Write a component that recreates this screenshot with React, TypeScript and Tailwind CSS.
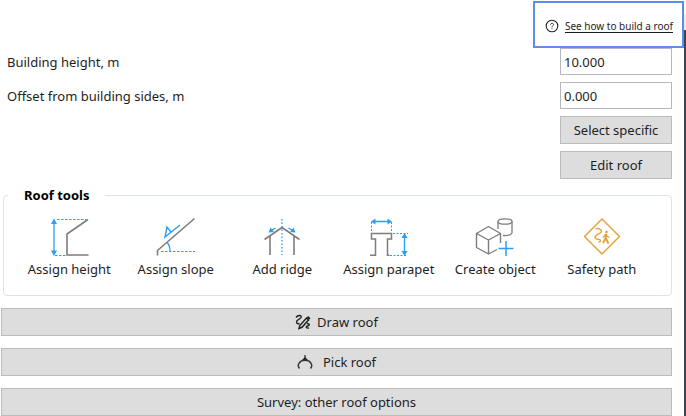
import { useState } from "react";
import type { ReactNode } from "react";

type Tool = {
  name: string;
  icon: ReactNode;
};

const GREY = "#7d7d7d";
const BLUE = "#2b9df5";
const ORANGE = "#e5a23c";

function ToolSvg({ children }: { children: ReactNode }) {
  return (
    <svg viewBox="0 0 40 40" className="h-10 w-10" fill="none" aria-hidden="true">
      {children}
    </svg>
  );
}

const tools: Tool[] = [
  {
    name: "Assign height",
    icon: (
      <ToolSvg>
        <path d="M8 2.5H37M6 38.5H17" stroke={BLUE} strokeDasharray="2.500 1.500" />
        <path d="M5 5V36" stroke={BLUE} strokeWidth="1.3" />
        <path d="M5 1.5L8 7H2ZM5 39L8 33.500H2Z" fill={BLUE} />
        <path d="M39 2.500L18 17V38H39.500" stroke={GREY} strokeWidth="1.6" />
      </ToolSvg>
    ),
  },
  {
    name: "Assign slope",
    icon: (
      <ToolSvg>
        <path d="M5 34.500H39" stroke={BLUE} strokeDasharray="2.500 1.500" />
        <path d="M11 25.500Q14 28.500 14 34" stroke={BLUE} strokeWidth="1.3" />
        <path d="M24 8L9 20L11 10L15.500 15.500" stroke={BLUE} strokeWidth="1.4" />
        <path d="M38.500 1.500L1.500 33.500V38.500" stroke={GREY} strokeWidth="1.6" />
      </ToolSvg>
    ),
  },
  {
    name: "Add ridge",
    icon: (
      <ToolSvg>
        <path d="M20 2V38" stroke={BLUE} strokeWidth="1.3" strokeDasharray="1.5 2" />
        <path d="M13.500 11L9 13.500M26.500 11L31 13.500" stroke={BLUE} strokeWidth="1.3" />
        <path d="M6.500 15.500L8.500 10.500L12 15ZM33.500 15.500L31.500 10.500L28 15Z" fill={BLUE} />
        <path d="M2.500 22.500L20 10.500L37.500 22.500M8 19V38M32 19V38" stroke={GREY} strokeWidth="1.6" />
      </ToolSvg>
    ),
  },
  {
    name: "Assign parapet",
    icon: (
      <ToolSvg>
        <path d="M2.500 5V15M22.500 5V15M24 16.500H39M21 38.500H37" stroke={BLUE} strokeDasharray="2 1.5" />
        <path d="M5 4.500H20M35.500 19V36" stroke={BLUE} strokeWidth="1.4" />
        <path
          d="M2 4.500L6.500 1.500V7.500ZM23 4.500L18.500 1.500V7.500ZM35.500 16L38.500 21H32.500ZM35.500 39L38.500 34H32.500Z"
          fill={BLUE}
        />
        <path
          d="M1 38.300H6.500V22H2.500V16.500H22.500V22H18.500V38.300H20.500"
          stroke={GREY}
          strokeWidth="1.5"
        />
      </ToolSvg>
    ),
  },
  {
    name: "Create object",
    icon: (
      <ToolSvg>
        <path
          d="M25.500 26V16.500L13.500 9.500L1.500 16.500V30.500L13.500 37L22 32.500M1.500 16.500L13.500 23L25.500 16.500M13.500 23V37"
          stroke={GREY}
          strokeWidth="1.4"
          strokeLinejoin="round"
        />
        <ellipse cx="30" cy="4.500" rx="7" ry="2.700" stroke={GREY} strokeWidth="1.3" />
        <path d="M23 4.500V12M37 4.500V16Q35.500 19 28 18.500" stroke={GREY} strokeWidth="1.3" />
        <path d="M31 24V39M23.500 31.500H38.500" stroke={BLUE} strokeWidth="1.5" />
      </ToolSvg>
    ),
  },
  {
    name: "Safety path",
    icon: (
      <ToolSvg>
        <path
          d="M20 2L37.500 19.500L20 37L2.500 19.500Z"
          stroke={ORANGE}
          strokeWidth="1.5"
          strokeLinejoin="round"
        />
        <path
          d="M13.500 12C16 10.500 19.500 12.500 19.500 14.500C19.500 17 13 17 13 20.500C13 23 17.500 21.500 18.500 23.500C18.800 24.800 17.500 25 16.500 25"
          stroke={ORANGE}
          strokeWidth="1.4"
        />
        <circle cx="24.500" cy="15" r="1.300" fill={ORANGE} />
        <path d="M24.500 17L23.500 21.500L21 26M24 21.500L26.500 26.500" stroke={ORANGE} strokeWidth="2" />
        <path d="M21 20.500L23.500 17.500L25.500 19.500L27.500 20.500" stroke={ORANGE} strokeWidth="1.300" />
      </ToolSvg>
    ),
  },
];

function DrawIcon() {
  return (
    <svg viewBox="0 0 16 16" className="h-4 w-4" fill="none" stroke="#222222" aria-hidden="true">
      <path
        d="M1 3.500C3 .5 7 1 6 3.500C5 5.500 1.500 5.500 1.500 8C1.500 9.500 3 10 4.500 9.500"
        strokeWidth="1.400"
      />
      <path d="M4 14.500L4.800 11.500L11.500 4L13.500 6L7 13.300Z" strokeWidth="1.500" />
      <path d="M12.500 2.800L14.700 5" strokeWidth="2.200" />
      <path d="M12 9.500C15 9.500 15 11.500 12.500 12C10.500 12.500 11 14.500 14 14" strokeWidth="1.400" />
    </svg>
  );
}

function PickIcon() {
  return (
    <svg viewBox="0 0 16 16" className="h-4 w-4" fill="none" stroke="#333333" aria-hidden="true">
      <path d="M8 1V5" strokeWidth="1.300" />
      <path d="M8 3L11.500 6.500H4.500Z" fill="#222222" stroke="none" />
      <path d="M2.500 14.500C-.5 11 2.500 6.300 8 6.300C13.500 6.300 16.500 11 13.500 14.500" strokeWidth="1.500" />
    </svg>
  );
}

function HelpIcon() {
  return (
    <svg viewBox="0 0 14 14" className="h-[14px] w-[14px]" fill="none" stroke="#222222" aria-hidden="true">
      <circle cx="7" cy="7" r="5.800" strokeWidth="1.100" />
      <path d="M5.500 5.700C5.500 3.800 8.500 3.800 8.500 5.600C8.500 6.700 7 6.700 7 8.200M7 9.200V10.200" strokeWidth=".9" />
    </svg>
  );
}

const buttonClass =
  "flex items-center justify-center border border-[#bcbcbc] bg-[#dddddd] text-[#1e1e1e] hover:bg-[#d2e6f5]";
const inputClass =
  "h-[27px] w-28 border border-[#b4b7c0] bg-white px-[3px] text-[#1e1e1e] outline-none focus:border-[#569de5]";

export default function App() {
  const [height, setHeight] = useState("10.000");
  const [offset, setOffset] = useState("0.000");

  return (
    <div className="flex bg-white font-['Noto_Sans','Open_Sans',sans-serif] text-[13px] leading-5 text-[#1e1e1e]">
      <main className="min-w-0 flex-1 pt-px">
        <div className="ml-auto flex h-[47px] w-[151px] items-center justify-end gap-[6px] border-2 border-[#5b8def] pt-[3px] pr-[9px]">
          <HelpIcon />
          <a
            href="#help"
            className="text-[10px] leading-4 whitespace-nowrap underline underline-offset-2"
          >
            See how to build a roof
          </a>
        </div>

        <div className="mr-3 flex flex-col gap-[7px] pl-[7px]">
          <div className="flex items-center justify-between">
            <label htmlFor="building-height">Building height, m</label>
            <input
              id="building-height"
              className={inputClass}
              value={height}
              onChange={(e) => setHeight(e.target.value)}
            />
          </div>
          <div className="flex items-center justify-between">
            <label htmlFor="side-offset">Offset from building sides, m</label>
            <input
              id="side-offset"
              className={inputClass}
              value={offset}
              onChange={(e) => setOffset(e.target.value)}
            />
          </div>
          <button type="button" className={`${buttonClass} h-7 w-28 self-end`}>
            Select specific
          </button>
          <button type="button" className={`${buttonClass} h-7 w-28 self-end`}>
            Edit roof
          </button>
        </div>

        <fieldset className="mt-[6px] mr-3 ml-[3px] rounded border border-[#dbe4ea] pr-4 pb-4 pl-3">
          <legend className="-ml-2 px-4 font-bold text-black">Roof tools</legend>
          <div className="mt-3 grid grid-cols-6">
            {tools.map((tool) => (
              <button
                key={tool.name}
                type="button"
                className="flex flex-col items-center gap-[2px] whitespace-nowrap hover:bg-[#f2f8fc]"
              >
                {tool.icon}
                {tool.name}
              </button>
            ))}
          </div>
        </fieldset>

        <div className="mt-3 mr-3 ml-px flex flex-col gap-3">
          <button type="button" className={`${buttonClass} h-7 gap-[6px]`}>
            <DrawIcon />
            Draw roof
          </button>
          <button type="button" className={`${buttonClass} h-7 gap-[10px]`}>
            <PickIcon />
            Pick roof
          </button>
          <button type="button" className={`${buttonClass} h-7`}>
            Survey: other roof options
          </button>
        </div>
      </main>

      <div className="flex w-[2px] flex-col pt-[14px]">
        <div className="h-4 bg-[#ececec]" />
        <div className="flex-1 bg-[#3b4453]" />
      </div>
    </div>
  );
}
